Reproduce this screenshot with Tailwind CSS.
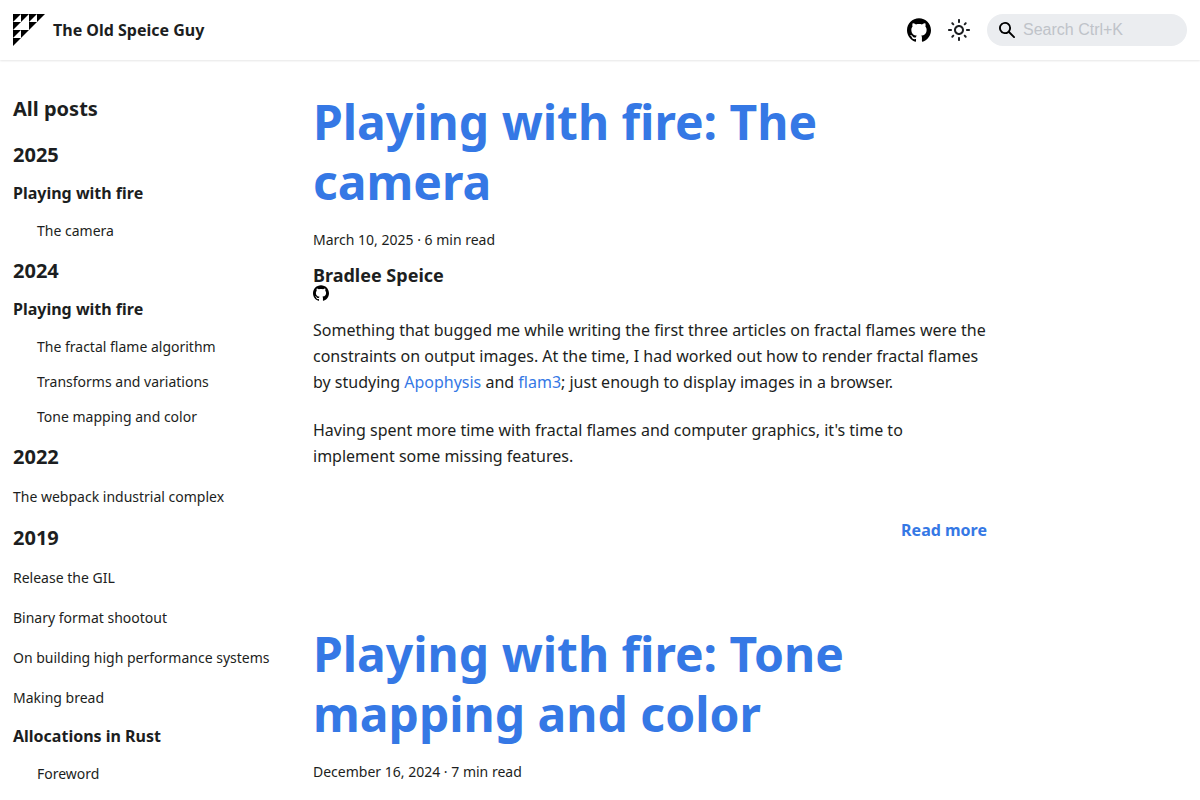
<!DOCTYPE html>
<html lang="en">
<head>
<meta charset="utf-8">
<meta name="viewport" content="width=device-width, initial-scale=1">
<title>The Old Speice Guy</title>
<script src="https://cdn.jsdelivr.net/npm/@tailwindcss/browser@4"></script>
</head>
<body class="bg-white font-['Noto_Sans',sans-serif] text-base text-[#1c1e21] [text-rendering:optimizeLegibility]">
<svg class="hidden" aria-hidden="true">
  <symbol id="github" viewBox="0 0 24 24"><path d="M12 .297c-6.63 0-12 5.373-12 12 0 5.303 3.438 9.8 8.205 11.385.6.113.82-.258.82-.577 0-.285-.01-1.04-.015-2.04-3.338.724-4.042-1.61-4.042-1.61C4.422 18.07 3.633 17.7 3.633 17.7c-1.087-.744.084-.729.084-.729 1.205.084 1.838 1.236 1.838 1.236 1.07 1.835 2.809 1.305 3.495.998.108-.776.417-1.305.76-1.605-2.665-.3-5.466-1.332-5.466-5.93 0-1.31.465-2.38 1.235-3.22-.135-.303-.54-1.523.105-3.176 0 0 1.005-.322 3.3 1.23.96-.267 1.98-.399 3-.405 1.02.006 2.04.138 3 .405 2.28-1.552 3.285-1.23 3.285-1.23.645 1.653.24 2.873.12 3.176.765.84 1.23 1.91 1.23 3.22 0 4.61-2.805 5.625-5.475 5.92.42.36.81 1.096.81 2.22 0 1.606-.015 2.896-.015 3.286 0 .315.21.69.825.57C20.565 22.092 24 17.592 24 12.297c0-6.627-5.373-12-12-12"/></symbol>
</svg>

<header class="sticky top-0 z-10 bg-white shadow-[0_1px_2px_0_rgba(0,0,0,0.1)]">
  <nav class="flex h-15 items-center justify-between px-[13px]" aria-label="Main">
    <a href="#" class="flex items-center gap-2 font-bold">
      <svg class="size-8" viewBox="0 0 4 4" fill="#000" aria-hidden="true"><path d="M0 0h1L0 1zM1 0h1L1 1zM2 0h1L2 1zM3 0h1L3 1zM0 1h1L0 2zM2 1h1L2 2zM0 2h1L0 3zM1 2h1L1 3zM0 3h1L0 4z"/></svg>
      The Old Speice Guy
    </a>
    <div class="flex items-center gap-4">
      <a href="#" aria-label="GitHub"><svg class="size-6 fill-black"><use href="#github"/></svg></a>
      <button type="button" aria-label="Switch between dark and light mode">
        <svg class="size-6" viewBox="0 0 24 24" fill="currentColor"><path d="M12,9c1.65,0,3,1.35,3,3s-1.35,3-3,3s-3-1.35-3-3S10.35,9,12,9 M12,7c-2.76,0-5,2.24-5,5s2.24,5,5,5s5-2.24,5-5 S14.76,7,12,7L12,7z M2,13l2,0c0.55,0,1-0.45,1-1s-0.45-1-1-1l-2,0c-0.55,0-1,0.45-1,1S1.45,13,2,13z M20,13l2,0c0.55,0,1-0.45,1-1 s-0.45-1-1-1l-2,0c-0.55,0-1,0.45-1,1S19.45,13,20,13z M11,2v2c0,0.55,0.45,1,1,1s1-0.45,1-1V2c0-0.55-0.45-1-1-1S11,1.45,11,2z M11,20v2c0,0.55,0.45,1,1,1s1-0.45,1-1v-2c0-0.55-0.45-1-1-1C11.45,19,11,19.45,11,20z M5.99,4.58c-0.39-0.39-1.03-0.39-1.41,0 c-0.39,0.39-0.39,1.03,0,1.41l1.06,1.06c0.39,0.39,1.03,0.39,1.41,0s0.39-1.03,0-1.41L5.99,4.58z M18.36,16.95 c-0.39-0.39-1.03-0.39-1.41,0c-0.39,0.39-0.39,1.03,0,1.41l1.06,1.06c0.39,0.39,1.03,0.39,1.41,0c0.39-0.39,0.39-1.03,0-1.41 L18.36,16.95z M19.42,5.99c0.39-0.39,0.39-1.03,0-1.41c-0.39-0.39-1.03-0.39-1.41,0l-1.06,1.06c-0.39,0.39-0.39,1.03,0,1.41 s1.03,0.39,1.41,0L19.42,5.99z M7.05,18.36c0.39-0.39,0.39-1.03,0-1.41c-0.39-0.39-1.03-0.39-1.41,0l-1.06,1.06 c-0.39,0.39-0.39,1.03,0,1.41s1.03,0.39,1.41,0L7.05,18.36z"/></svg>
      </button>
      <label class="flex h-8 w-[200px] items-center gap-2 rounded-full bg-[#ebedf0] px-3">
        <svg class="size-4 shrink-0" viewBox="0 0 16 16" fill="#000" aria-hidden="true"><path d="M6.02945,10.20327a4.17382,4.17382,0,1,1,4.17382-4.17382A4.15609,4.15609,0,0,1,6.02945,10.20327Zm9.69195,4.2199L10.8989,9.59979A5.88021,5.88021,0,0,0,12.058,6.02856,6.00467,6.00467,0,1,0,9.59979,10.8989l4.82338,4.82338a.89729.89729,0,0,0,1.29912,0,.89749.89749,0,0,0-.00087-1.29909Z"/></svg>
        <input type="search" aria-label="Search" placeholder="Search Ctrl+K" class="w-full min-w-0 bg-transparent font-['Liberation_Sans',sans-serif] outline-none placeholder:text-[#bfc3c9]">
      </label>
    </div>
  </nav>
</header>

<div class="flex pt-8">
  <aside class="w-3/12 px-[13px] text-sm">
    <nav aria-label="Blog recent posts navigation">
      <h2 class="mb-[9px] flex h-[33px] items-center text-xl font-bold">All posts</h2>
      <h3 class="flex h-[41px] items-center text-xl font-bold">2025</h3>
      <h4 class="mb-[3px] flex h-[35px] items-center text-base font-bold">Playing with fire</h4>
      <ul class="mb-[2px] pl-6">
        <li class="flex h-[35px] items-center"><a href="#">The camera</a></li>
      </ul>
      <h3 class="flex h-[41px] items-center text-xl font-bold">2024</h3>
      <h4 class="mb-[3px] flex h-[35px] items-center text-base font-bold">Playing with fire</h4>
      <ul class="mb-[2px] pl-6">
        <li class="flex h-[35px] items-center"><a href="#">The fractal flame algorithm</a></li>
        <li class="flex h-[35px] items-center"><a href="#">Transforms and variations</a></li>
        <li class="flex h-[35px] items-center"><a href="#">Tone mapping and color</a></li>
      </ul>
      <h3 class="flex h-[41px] items-center text-xl font-bold">2022</h3>
      <ul>
        <li class="flex h-10 items-center"><a href="#">The webpack industrial complex</a></li>
      </ul>
      <h3 class="flex h-[41px] items-center text-xl font-bold">2019</h3>
      <ul>
        <li class="flex h-10 items-center"><a href="#">Release the GIL</a></li>
        <li class="flex h-10 items-center"><a href="#">Binary format shootout</a></li>
        <li class="flex h-10 items-center"><a href="#">On building high performance systems</a></li>
        <li class="flex h-10 items-center"><a href="#">Making bread</a></li>
      </ul>
      <h4 class="mb-[3px] flex h-[35px] items-center text-base font-bold">Allocations in Rust</h4>
      <ul class="pl-6">
        <li class="flex h-[35px] items-center"><a href="#">Foreword</a></li>
      </ul>
    </nav>
  </aside>

  <main class="w-7/12 px-[13px]">
    <article class="mb-[81px]">
      <header>
        <h2 class="text-5xl/[60px] font-bold text-[#3578e5]"><a href="#">Playing with fire: The camera</a></h2>
        <p class="mt-4 mb-[14px] text-sm/6"><time datetime="2025-03-10">March 10, 2025</time> · 6 min read</p>
        <p class="text-lg/[19px] font-bold"><a href="#">Bradlee Speice</a></p>
        <a href="#" class="mb-4 block w-4" aria-label="Bradlee Speice on GitHub"><svg class="size-4 fill-black"><use href="#github"/></svg></a>
      </header>
      <p class="mb-[22px] leading-[26px]">Something that bugged me while writing the first three articles on fractal flames were the constraints on output images. At the time, I had worked out how to render fractal flames by studying <a href="#" class="text-[#3578e5]">Apophysis</a> and <a href="#" class="text-[#3578e5]">flam3</a>; just enough to display images in a browser.</p>
      <p class="leading-[26px]">Having spent more time with fractal flames and computer graphics, it's time to implement some missing features.</p>
      <footer class="mt-12 text-right leading-[26px]"><a href="#" class="font-bold text-[#3578e5]">Read more</a></footer>
    </article>
    <article>
      <header>
        <h2 class="text-5xl/[60px] font-bold text-[#3578e5]"><a href="#">Playing with fire: Tone mapping and color</a></h2>
        <p class="mt-4 text-sm/6"><time datetime="2024-12-16">December 16, 2024</time> · 7 min read</p>
      </header>
    </article>
  </main>
</div>
</body>
</html>
